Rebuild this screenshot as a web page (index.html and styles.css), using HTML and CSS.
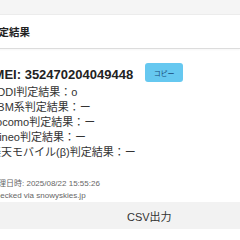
FILE: index.html
```html
<!DOCTYPE html>
<html>
<head>
  <meta charset="utf-8">
  <link rel="stylesheet" href="styles.css">
</head>
<body>

<div class="backdrop"></div>

<div class="modal">
  <div class="modal-header">
    <h3 class="modal-title">判定結果</h3>
  </div>

  <div class="modal-body">
    <div class="imei-row">
      <span class="imei">IMEI: 352470204049448</span>
      <button class="copy-btn">コピー</button>
    </div>

    <!-- carrier results -->
    <ul class="results">
      <li>KDDI判定結果：o</li>
      <li>SBM系判定結果：ー</li>
      <li>docomo判定結果：ー</li>
      <li>mineo判定結果：ー</li>
      <li>楽天モバイル(β)判定結果：ー</li>
    </ul>

    <p class="note">処理日時: 2025/08/22 15:55:26</p>
    <p class="note">Checked via snowyskies.jp</p>
  </div>

  <div class="modal-footer">
    <button class="csv-btn">CSV出力</button>
  </div>
</div>

</body>
</html>
```

FILE: styles.css
```css
/* Page */
body {
  margin: 0;
  background: #fff;
  font-family: "Liberation Sans", "Noto Sans CJK JP", sans-serif;
  color: #333;
  overflow: hidden;
}

.backdrop {
  height: 14px;
  background: #f5f5f5;
  border-bottom: 1px solid #ececec;
}

/* Header */
.modal-header {
  height: 33px;
  display: flex;
  align-items: center;
  margin-left: -12px;
  border-bottom: 1px solid #dcdcdc;
  box-shadow: 0 1px 2px rgba(0, 0, 0, 0.04);
}

.modal-title {
  margin: 0;
  font-size: 10.5px;
  font-weight: bold;
  color: #222;
}

/* Body */
.modal-body {
  margin-left: -10px;
  padding-top: 14px;
}

.imei-row {
  display: flex;
  align-items: center;
  gap: 12px;
}

.imei {
  font-size: 13px;
  font-weight: bold;
  color: #222;
  padding-top: 3px;
}

.copy-btn {
  width: 38px;
  height: 19px;
  padding: 0;
  border: none;
  border-radius: 3px;
  background: #66c8f0;
  color: #174a78;
  font-family: inherit;
  font-size: 7px;
}

.results {
  list-style: none;
  margin: 3px 0 0;
  padding: 0;
  font-size: 11px;
  line-height: 15px;
}

.note {
  margin: 0;
  font-size: 8px;
  line-height: 12px;
  color: #666;
}

.results + .note {
  margin-top: 18px;
}

/* Footer */
.modal-footer {
  height: 27px;
  display: flex;
  align-items: center;
  background: #f2f2f2;
  padding-left: 127px;
}

.csv-btn {
  padding: 0;
  border: none;
  background: none;
  font-family: inherit;
  font-size: 11px;
  color: #333;
}
```
